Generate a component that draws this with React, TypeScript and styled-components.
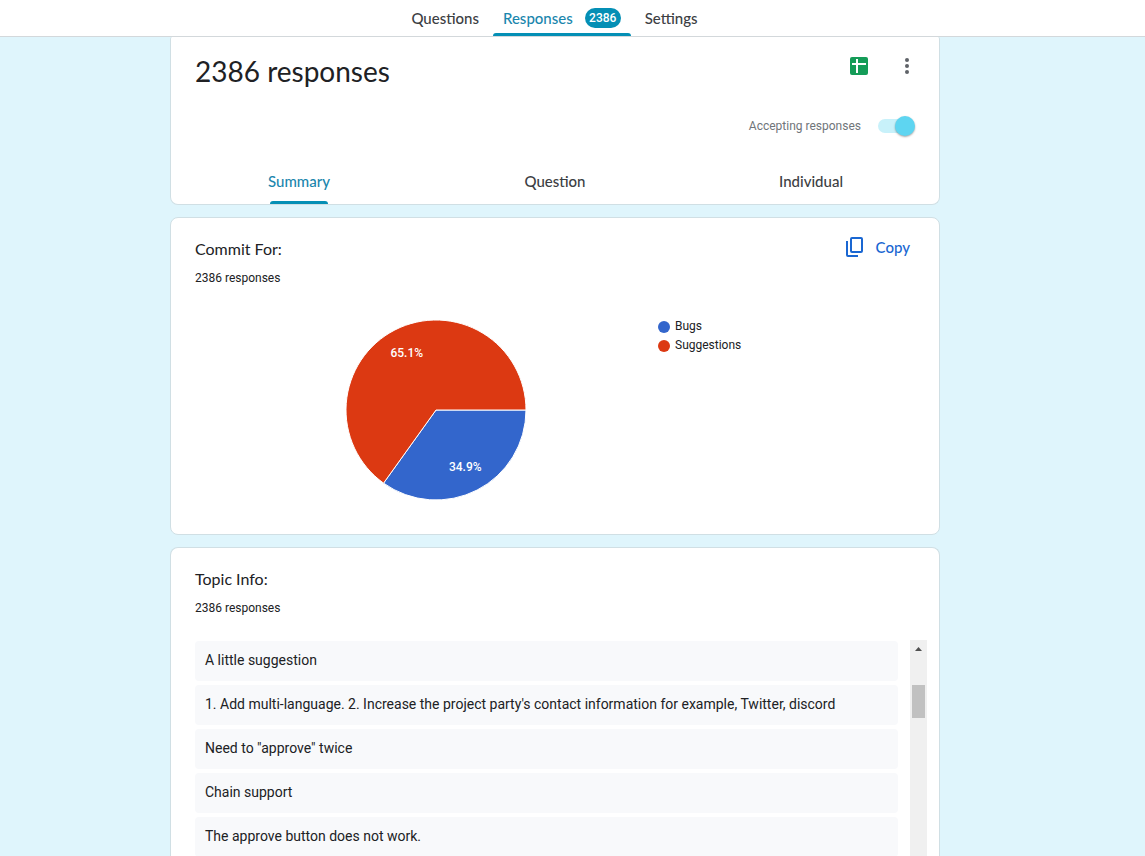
import React from "react";
import styled, { createGlobalStyle } from "styled-components";

const display = `"Google Sans", Lato, "Open Sans", sans-serif`;
const body = `Roboto, "Liberation Sans", sans-serif`;

const GlobalStyle = createGlobalStyle`
  *, *::before, *::after { box-sizing: border-box; }
  body { margin: 0; background: #dff5fc; color: #202124; font-family: ${body}; }
  h1, h2, p, ul { margin: 0; padding: 0; font-weight: 400; }
  button { font: inherit; color: inherit; background: none; border: 0; padding: 0; cursor: pointer; }
`;

const Page = styled.div`
  display: flex;
  flex-direction: column;
  height: 100vh;
  overflow: hidden;
`;

const TopBar = styled.nav`
  flex: none;
  display: flex;
  justify-content: center;
  height: 37px;
  padding-right: 36px;
  background: #fff;
  border-bottom: 1px solid #d3d8db;
`;

const TopTab = styled.button<{ $active?: boolean }>`
  position: relative;
  display: flex;
  align-items: center;
  gap: 12px;
  height: 36px;
  padding: 0 ${(p) => (p.$active ? 10 : 14)}px;
  font: 500 15px/20px ${display};
  color: ${(p) => (p.$active ? "#1a86ad" : "#3c4043")};
  ${(p) =>
    p.$active &&
    `&::after {
      content: "";
      position: absolute;
      left: 0; right: 0; bottom: 0;
      height: 3px;
      border-radius: 3px 3px 0 0;
      background: #048fb5;
    }`}
`;

const Count = styled.span`
  padding: 0 4px;
  border-radius: 10px;
  background: #048fb5;
  color: #fff;
  font: 500 12px/20px ${body};
  min-width: 36px;
  text-align: center;
`;

const Main = styled.main`
  flex: 1;
  min-height: 0;
  display: flex;
  flex-direction: column;
  gap: 12px;
  padding: 0 36px 0 1px;
`;

const Card = styled.section`
  flex: none;
  width: 100%;
  max-width: 770px;
  margin: 0 auto;
  background: #fff;
  border: 1px solid #d0dfe4;
  border-radius: 8px;
`;

const OverviewCard = styled(Card)`
  border-top: 0;
  border-radius: 2px 2px 8px 8px;
`;

const ListCard = styled(Card)`
  flex: 1;
  min-height: 0;
  display: flex;
  flex-direction: column;
  border-bottom: 0;
  border-radius: 8px 8px 0 0;
`;

const Heading = styled.header`
  display: flex;
  justify-content: space-between;
  padding: 16px 20px 0 24px;
`;

const Title = styled.h1`
  font: 400 28px/36px ${display};
`;

const Actions = styled.div`
  display: flex;
  gap: 24px;
  height: 26px;
  align-items: center;
`;

const IconButton = styled.button`
  display: grid;
  place-items: center;
  min-width: 24px;
  height: 24px;
`;

const Accepting = styled.label`
  display: flex;
  justify-content: flex-end;
  align-items: center;
  gap: 17px;
  padding: 27px 24px 0;
  font-size: 12px;
  line-height: 20px;
  color: #70757a;
`;

const Switch = styled.input`
  appearance: none;
  position: relative;
  width: 37px;
  height: 20px;
  margin: 0;
  cursor: pointer;
  &::before {
    content: "";
    position: absolute;
    left: 0; right: 4px; top: 3px;
    height: 14px;
    border-radius: 7px;
    background: #c8f1fa;
  }
  &::after {
    content: "";
    position: absolute;
    left: 0; top: 0;
    width: 20px;
    height: 20px;
    border-radius: 50%;
    background: #5ed5f1;
    box-shadow: 0 1px 2px rgba(0, 0, 0, 0.35);
  }
  &:checked::after { left: auto; right: 0; }
`;

const ViewTabs = styled.div`
  display: grid;
  grid-template-columns: repeat(3, 1fr);
  margin-top: 22px;
`;

const ViewTab = styled.button<{ $active?: boolean }>`
  display: flex;
  flex-direction: column;
  align-items: center;
  justify-content: flex-end;
  gap: 10px;
  height: 46px;
  font: 500 15px/20px ${display};
  color: ${(p) => (p.$active ? "#1a86ad" : "#3c4043")};
  &::after {
    content: "";
    width: 58px;
    height: 3px;
    border-radius: 3px 3px 0 0;
    background: ${(p) => (p.$active ? "#048fb5" : "transparent")};
  }
`;

const QuestionHead = styled.header`
  display: flex;
  justify-content: space-between;
  padding: 19px 29px 0 24px;
`;

const QuestionTitle = styled.h2`
  font: 400 16px/24px ${display};
`;

const Responses = styled.p`
  margin-top: 7px;
  font-size: 12px;
  line-height: 20px;
`;

const CopyButton = styled.button`
  display: flex;
  align-items: center;
  gap: 9px;
  height: 20px;
  font: 500 15px/20px ${display};
  color: #1a67d2;
`;

const ChartRow = styled.div`
  display: flex;
  align-items: flex-start;
  gap: 131px;
  padding: 29px 24px 31px 174px;
`;

const Pie = styled.svg`
  flex: none;
  display: block;
  text {
    font: 500 12px ${body};
    fill: #fff;
    text-anchor: middle;
  }
`;

const Legend = styled.ul`
  list-style: none;
`;

const LegendItem = styled.li<{ $color: string }>`
  display: flex;
  align-items: center;
  gap: 5px;
  font-size: 12px;
  line-height: 19px;
  &::before {
    content: "";
    width: 12px;
    height: 12px;
    border-radius: 50%;
    background: ${(p) => p.$color};
  }
`;

const Scroller = styled.div`
  flex: 1;
  min-height: 0;
  display: flex;
  gap: 12px;
  margin-top: 22px;
  padding: 0 12px 0 24px;
`;

const Answers = styled.ul`
  flex: 1;
  min-width: 0;
  list-style: none;
  overflow: hidden;
  padding-top: 1px;
`;

const Answer = styled.li`
  margin-bottom: 4px;
  padding: 9px 10px 11px;
  border-radius: 4px;
  background: #f8f9fb;
  font-size: 14px;
  line-height: 20px;
  overflow-wrap: anywhere;
`;

const ScrollTrack = styled.div`
  width: 17px;
  background: #f0f0f0;
  display: flex;
  flex-direction: column;
  align-items: center;
`;

const ScrollUp = styled.svg`
  flex: none;
  display: block;
  margin-bottom: 28px;
`;

const ScrollThumb = styled.div`
  width: 13px;
  height: 33px;
  background: #c1c1c1;
`;

const answers = [
  "A little suggestion",
  "1. Add multi-language. 2. Increase the project party's contact information for example, Twitter, discord",
  'Need to "approve" twice',
  "Chain support",
  "The approve button does not work.",
];

const slices = [
  { label: "Bugs", color: "#3366cc", share: 0.349 },
  { label: "Suggestions", color: "#dc3912", share: 0.651 },
];

function PieChart() {
  const r = 90;
  let start = 0;
  return (
    <Pie width="182" height="186" viewBox="-91 -93 182 186" role="img" aria-label="Bugs 34.9%, Suggestions 65.1%">
      {slices.map((s) => {
        const a = start;
        const b = a + s.share * Math.PI * 2;
        start = b;
        const mid = (a + b) / 2;
        const d = `M0 0L${r * Math.cos(a)} ${r * Math.sin(a)}A${r} ${r} 0 ${s.share > 0.5 ? 1 : 0} 1 ${r * Math.cos(b)} ${r * Math.sin(b)}Z`;
        return (
          <g key={s.label}>
            <path d={d} fill={s.color} stroke="#fff" strokeWidth="1" />
            <text x={64 * Math.cos(mid)} y={64 * Math.sin(mid) + 4}>
              {(s.share * 100).toFixed(1)}%
            </text>
          </g>
        );
      })}
    </Pie>
  );
}

export default function App() {
  return (
    <Page>
      <GlobalStyle />
      <TopBar>
        <TopTab>Questions</TopTab>
        <TopTab $active>
          Responses <Count>2386</Count>
        </TopTab>
        <TopTab>Settings</TopTab>
      </TopBar>
      <Main>
        <OverviewCard>
          <Heading>
            <Title>2386 responses</Title>
            <Actions>
              <IconButton aria-label="View in Sheets">
                <svg width="18" height="18" viewBox="0 0 18 18">
                  <rect width="18" height="18" rx="2" fill="#159c58" />
                  <path d="M2 7H16M7 2V16" stroke="#fff" strokeWidth="2" />
                </svg>
              </IconButton>
              <IconButton aria-label="More options">
                <svg width="24" height="24" viewBox="0 0 24 24" fill="#5f6368">
                  <circle cx="12" cy="6" r="2" />
                  <circle cx="12" cy="12" r="2" />
                  <circle cx="12" cy="18" r="2" />
                </svg>
              </IconButton>
            </Actions>
          </Heading>
          <Accepting>
            Accepting responses
            <Switch type="checkbox" role="switch" defaultChecked />
          </Accepting>
          <ViewTabs>
            <ViewTab $active>Summary</ViewTab>
            <ViewTab>Question</ViewTab>
            <ViewTab>Individual</ViewTab>
          </ViewTabs>
        </OverviewCard>

        <Card>
          <QuestionHead>
            <div>
              <QuestionTitle>Commit For:</QuestionTitle>
              <Responses>2386 responses</Responses>
            </div>
            <CopyButton>
              <svg width="24" height="24" viewBox="0 0 24 24" fill="none" stroke="currentColor" strokeWidth="2">
                <rect x="8" y="3" width="11" height="14" rx="1" />
                <path d="M4 6V20Q4 21 5 21H15" />
              </svg>
              Copy
            </CopyButton>
          </QuestionHead>
          <ChartRow>
            <PieChart />
            <Legend>
              {slices.map((s) => (
                <LegendItem key={s.label} $color={s.color}>
                  {s.label}
                </LegendItem>
              ))}
            </Legend>
          </ChartRow>
        </Card>

        <ListCard>
          <QuestionHead>
            <div>
              <QuestionTitle>Topic Info:</QuestionTitle>
              <Responses>2386 responses</Responses>
            </div>
          </QuestionHead>
          <Scroller>
            <Answers>
              {answers.map((a) => (
                <Answer key={a}>{a}</Answer>
              ))}
            </Answers>
            <ScrollTrack aria-hidden="true">
              <ScrollUp width="17" height="17" viewBox="0 0 17 17">
                <path d="M5 11L8.5 7L12 11Z" fill="#505050" />
              </ScrollUp>
              <ScrollThumb />
            </ScrollTrack>
          </Scroller>
        </ListCard>
      </Main>
    </Page>
  );
}
